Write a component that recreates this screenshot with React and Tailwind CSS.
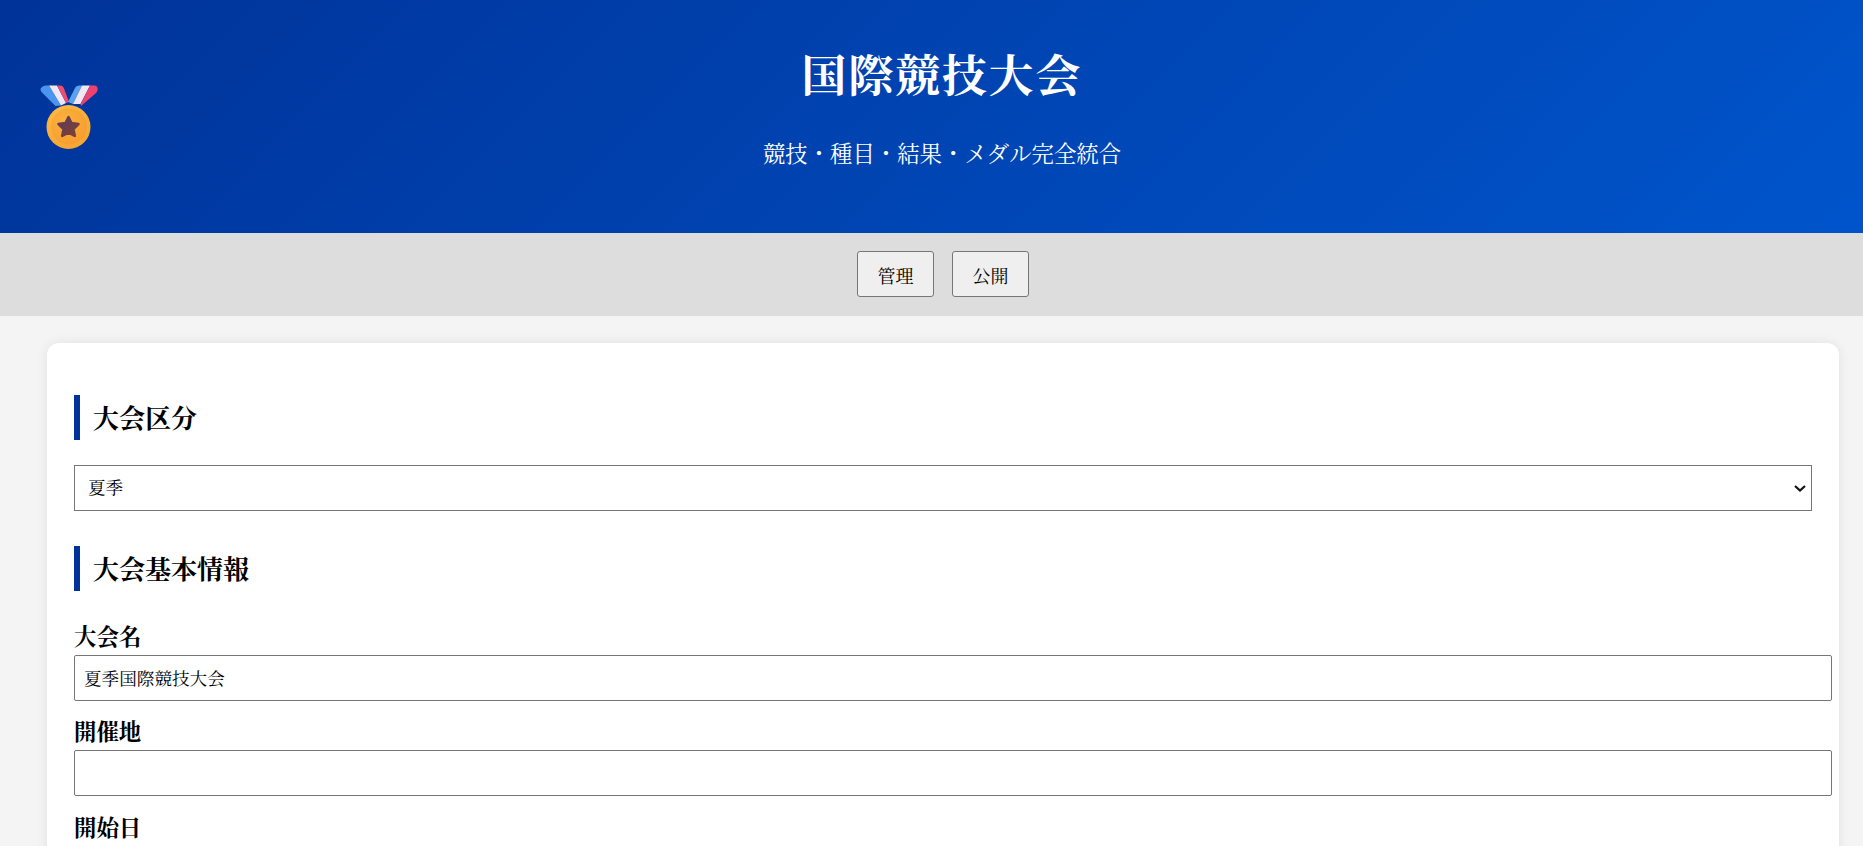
const FONT = "font-['Noto_Serif_CJK_JP','Liberation_Serif','Noto_Sans_CJK_JP',serif]";

function Medal() {
  return (
    <svg viewBox="30 80 80 75" className="h-[75px] w-[80px]" aria-hidden="true">
      <defs>
        <radialGradient id="m1" cx="0.4" cy="0.3" r="0.85">
          <stop offset="0" stopColor="#fdc04a" />
          <stop offset="1" stopColor="#f6a02e" />
        </radialGradient>
        <radialGradient id="m2" cx="0.4" cy="0.35" r="0.8">
          <stop offset="0" stopColor="#fbb23f" />
          <stop offset="1" stopColor="#f59a2c" />
        </radialGradient>
        <linearGradient id="s1" x1="0" y1="0" x2="1" y2="1">
          <stop offset="0" stopColor="#5f3a5c" />
          <stop offset="1" stopColor="#7c4234" />
        </linearGradient>
      </defs>
      <path d="M41.500 92 Q39.500 89 41.500 87.500 Q43 85.500 46 85.500 L49 85.500 L61 105.500 L55.500 106 Z" fill="#4a95ee" />
      <path d="M49 85.500 L57 85.500 L66 103 L61 105.500 Z" fill="#efe7f6" />
      <path d="M57 85.500 L60 85.500 Q63 85.500 64 88.500 L69 102 L66 103 Z" fill="#ee4d70" />
      <path d="M75 88 Q76 85.500 79 85.500 L82 85.500 L73 104 L68 102 Z" fill="#5aa2f0" />
      <path d="M82 85.500 L90 85.500 L80.500 104 L73 104 Z" fill="#efe7f6" />
      <path d="M90 85.500 L94 85.500 Q98.500 85.500 97.500 90.500 Q97 92 95.500 93.500 L81 106 L80.500 104 Z" fill="#ec4271" />
      <circle cx="68.500" cy="127" r="22" fill="url(#m1)" />
      <circle cx="69" cy="126.500" r="18" fill="url(#m2)" />
      <path d="M68.500 117 L71.500 123 L78.500 124 L73.500 129 L74.800 136 L68.500 132.600 L62.200 136 L63.500 129 L58.500 124 L65.500 123 Z" fill="url(#s1)" stroke="url(#s1)" strokeWidth="2.500" strokeLinejoin="round" />
    </svg>
  );
}

function Heading({ children, className = "" }) {
  return (
    <h2 className={`border-l-[6px] border-[#003399] pb-[2px] pl-[13px] text-[26px] font-bold leading-[43px] text-black ${className}`}>
      {children}
    </h2>
  );
}

function Field({ label, value = "" }) {
  return (
    <div>
      <label className="block pb-[4px] text-[22.4px] font-bold leading-[32px] text-black">{label}</label>
      <input
        readOnly
        value={value}
        className="box-content block h-[26px] w-full rounded-[2px] border border-[#767676] bg-white py-[9px] pl-[9px] pr-[9px] text-[17.6px] text-black outline-none"
      />
    </div>
  );
}

export default function App() {
  return (
    <div className={`h-[846px] overflow-hidden bg-[#f4f4f4] ${FONT}`}>
      <div className="w-[1886px]">
        <header className="relative flex h-[233px] flex-col items-center bg-[linear-gradient(135deg,#003399,#0055cc)] pr-[2px] pt-[42px] text-white">
          <div className="absolute left-[30px] top-[80px]"><Medal /></div>
          <h1 className="text-[44.8px] font-bold leading-[62px] tracking-[2px]">国際競技大会</h1>
          <p className="mt-[32px] text-[22.4px] leading-[32px]">競技・種目・結果・メダル完全統合</p>
        </header>
        <nav className="flex h-[83px] items-start justify-center gap-[18px] bg-[#dddddd] pt-[18px]">
          <button className="h-[46px] w-[77px] rounded-[3px] border border-[#767676] bg-[#efefef] pt-[2px] text-[18px] text-black">管理</button>
          <button className="h-[46px] w-[77px] rounded-[3px] border border-[#767676] bg-[#efefef] pt-[2px] text-[18px] text-black">公開</button>
        </nav>
        <main className="mx-[47px] mt-[27px] rounded-[12px] bg-white px-[27px] pt-[52px] pb-[40px] shadow-[0_0_12px_rgba(0,0,0,0.08)]">
          <Heading>大会区分</Heading>
          <div className="relative mt-[25px]">
            <select className="block h-[46px] w-full appearance-none rounded-none border border-[#767676] bg-white pb-[2px] pl-[13px] pr-[24px] text-[17.6px] text-black outline-none">
              <option>夏季</option>
              <option>冬季</option>
            </select>
            <svg viewBox="0 0 12 7" className="pointer-events-none absolute right-[6px] top-[20px] h-[7px] w-[12px]" aria-hidden="true">
              <path d="M1 1 L6 5.500 L11 1" fill="none" stroke="#111111" strokeWidth="2.200" />
            </svg>
          </div>
          <Heading className="mt-[35px] mb-[28px]">大会基本情報</Heading>
          <div className="flex flex-col gap-[13.3px]">
            <Field label="大会名" value="夏季国際競技大会" />
            <Field label="開催地" />
            <Field label="開始日" />
          </div>
        </main>
      </div>
    </div>
  );
}
